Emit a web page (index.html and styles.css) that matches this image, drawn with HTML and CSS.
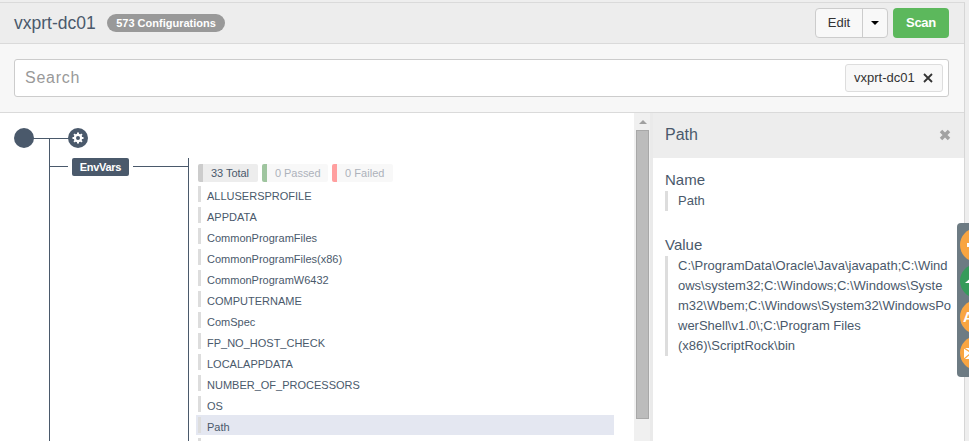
FILE: index.html
```html
<!DOCTYPE html>
<html lang="en">
<head>
<meta charset="utf-8">
<title>vxprt-dc01</title>
<link rel="stylesheet" href="styles.css">
</head>
<body>
<div class="app">
  <header class="header">
    <h1 class="title">vxprt-dc01</h1>
    <span class="badge">573 Configurations</span>
    <div class="actions">
      <div class="split">
        <button class="edit">Edit</button>
        <button class="caret" aria-label="More"><i></i></button>
      </div>
      <button class="scan">Scan</button>
    </div>
  </header>
  <div class="searchbar">
    <div class="search">
      <span class="placeholder">Search</span>
      <span class="tag"><span class="tag-text">vxprt-dc01</span>
        <svg width="10" height="10" viewBox="0 0 10 10"><path d="M1 1l8 8M9 1l-8 8" stroke="#333" stroke-width="1.8"/></svg>
      </span>
    </div>
  </div>
  <main class="main">
    <section class="tree">
      <svg class="links" width="190" height="328" viewBox="0 0 190 328">
        <g fill="#4a596b">
          <rect x="24" y="25" width="54" height="1"/>
          <rect x="49" y="25" width="1" height="303"/>
          <rect x="50" y="53" width="18" height="1"/>
          <rect x="133" y="53" width="55" height="1"/>
          <rect x="188" y="45" width="1" height="283"/>
          <circle cx="24" cy="25" r="10"/>
          <circle cx="78" cy="25" r="10"/>
        </g>
        <circle cx="78" cy="25" r="3.1" fill="none" stroke="#fff" stroke-width="2.2"/>
        <path d="M78 19.5v2M78 28.5v2M72.5 25h2M81.500 25h2M74.100 21.100l1.500 1.500M80.400 27.400l1.500 1.500M81.900 21.100l-1.500 1.500M75.600 27.400l-1.500 1.500" stroke="#fff" stroke-width="2"/>
      </svg>
      <span class="node">EnvVars</span>
      <div class="results">
        <div class="counts">
          <span class="count total">33 Total</span>
          <span class="count passed">0 Passed</span>
          <span class="count failed">0 Failed</span>
        </div>
        <ul class="items">
          <li>ALLUSERSPROFILE</li>
          <li>APPDATA</li>
          <li>CommonProgramFiles</li>
          <li>CommonProgramFiles(x86)</li>
          <li>CommonProgramW6432</li>
          <li>COMPUTERNAME</li>
          <li>ComSpec</li>
          <li>FP_NO_HOST_CHECK</li>
          <li>LOCALAPPDATA</li>
          <li>NUMBER_OF_PROCESSORS</li>
          <li>OS</li>
          <li class="selected">Path</li>
          <li></li>
        </ul>
      </div>
    </section>
    <div class="scroll"><i class="up"></i><div class="thumb"></div></div>
    <aside class="details">
      <div class="details-head"><h2>Path</h2>
        <svg width="12" height="12" viewBox="0 0 12 12"><path d="M2 2l8 8M10 2l-8 8" stroke="#a2a2a2" stroke-width="3.500"/></svg>
      </div>
      <div class="field">
        <h3>Name</h3>
        <div class="value">Path</div>
      </div>
      <div class="field">
        <h3>Value</h3>
        <div class="value">C:\ProgramData\Oracle\Java\javapath;C:\Wind<br>ows\system32;C:\Windows;C:\Windows\Syste<br>m32\Wbem;C:\Windows\System32\WindowsPo<br>werShell\v1.0\;C:\Program Files<br>(x86)\ScriptRock\bin</div>
      </div>
    </aside>
  </main>
</div>
<div class="dock">
  <span class="disc"><svg width="34" height="34" viewBox="0 0 34 34"><path d="M7 15h8v4H7z" fill="#fff"/></svg></span>
  <span class="disc green"><svg width="34" height="34" viewBox="0 0 34 34"><path d="M5 19l8-7v7z" fill="#fff"/></svg></span>
  <span class="disc letter">A</span>
  <span class="disc"><svg width="34" height="34" viewBox="0 0 34 34"><path d="M4 12h22v11H4z" fill="#fff"/><path d="M4 12l9 6 9-6M4 23l7-6" fill="none" stroke="#f9a541" stroke-width="1.200"/></svg></span>
</div>
</body>
</html>
```
FILE: styles.css
```css
* { box-sizing: border-box; }
body { margin: 0; width: 969px; height: 441px; overflow: hidden; background: #eee; font-family: "Liberation Sans", Arial, sans-serif; color: #4a596b; }
h1, h2, h3, ul { margin: 0; padding: 0; font-weight: normal; }
button { font-family: inherit; margin: 0; padding: 0; }
.app { width: 965px; height: 439px; margin-top: 2px; border-top: 1px solid #dadada; border-right: 1px solid #d6d6d6; }
.header { display: flex; align-items: center; height: 41px; padding: 0 15px 0 14px; background: #ededed; border-bottom: 1px solid #dadada; }
.title { font-size: 17.5px; line-height: 20px; width: 93px; white-space: nowrap; }
.badge { width: 118px; height: 18px; border-radius: 9px; background: #999; color: #fff; font-size: 11px; font-weight: bold; line-height: 18px; text-align: center; letter-spacing: 0; white-space: nowrap; }
.actions { display: flex; gap: 5px; margin-left: auto; }
.split { display: flex; width: 73px; height: 30px; border: 1px solid #ccc; border-radius: 4px; background: #f8f8f8; overflow: hidden; }
.edit { width: 47px; border: 0; border-right: 1px solid #ccc; background: none; font-size: 13px; color: #333; padding-bottom: 2px; }
.caret { flex: 1; display: flex; align-items: center; justify-content: center; border: 0; background: none; }
.caret i { border: 4px solid transparent; border-top-color: #000; border-bottom: 0; }
.scan { width: 56px; height: 30px; border: 0; border-radius: 4px; background: #5cb85c; color: #fff; font-size: 13px; font-weight: bold; letter-spacing: -.3px; padding-bottom: 2px; }
.searchbar { height: 69px; padding: 15px 15px 0 14px; background: #f7f7f7; border-bottom: 1px solid #dadada; }
.search { display: flex; align-items: center; justify-content: space-between; height: 38px; padding: 0 5px 0 10px; border: 1px solid #ccc; border-radius: 3px; background: #fff; }
.placeholder { font-size: 16px; letter-spacing: .75px; color: #999; }
.tag { display: flex; align-items: center; justify-content: space-between; width: 98px; height: 28px; padding: 0 9px 0 8px; border: 1px solid #ddd; border-radius: 3px; background: #f8f8f8; font-size: 13px; color: #333; }
.tag-text { padding-bottom: 1px; }
.main { display: flex; height: 328px; background: #fff; }
.tree { position: relative; width: 634px; height: 328px; overflow: hidden; }
.links { position: absolute; left: 0; top: 0; }
.node { position: absolute; left: 72px; top: 45px; width: 57px; height: 18px; border-radius: 2px; background: #4a596b; color: #fff; font-size: 11px; font-weight: bold; line-height: 19px; text-align: center; letter-spacing: -.3px; }
.results { margin: 51px 0 0 196px; width: 418px; }
.counts { display: flex; gap: 4px; height: 18px; padding-left: 2px; }
.count { border-left: 5px solid; border-radius: 2px; padding-left: 8px; font-size: 11px; line-height: 18px; background: #f8f8f8; color: #adb2bb; white-space: nowrap; }
.total { width: 60px; border-color: #ccc; background: #ededed; color: #4a596b; letter-spacing: -.05px; }
.passed { width: 66px; border-color: #9fc59f; letter-spacing: -.05px; }
.failed { width: 61px; border-color: #ff9f9f; letter-spacing: .05px; }
.items { list-style: none; padding-top: 2px; }
.items li { display: flex; align-items: flex-start; height: 21px; padding: 2px 0 0 2px; font-size: 11px; line-height: 21px; white-space: nowrap; }
.items li::before { content: ""; flex: none; width: 3px; height: 16px; margin-right: 6px; background: #ddd; }
.items .selected { background: #e4e7f1; height: 20px; margin-bottom: 1px; }
.scroll { width: 18px; background: #f0f0f0; border-right: 2px solid #eaeaea; padding-left: 2px; }
.up { display: block; width: 0; margin: 7px 0 6px 3px; border: 4px solid transparent; border-top: 0; border-bottom-color: #a0a0a0; }
.thumb { width: 13px; height: 289px; background: #bcbcbc; border: 1px solid #a8a8a8; }
.details { width: 312px; border-left: 1px solid #eaeaea; }
.details-head { display: flex; align-items: center; justify-content: space-between; height: 45px; padding: 0 13px 2px 12px; background: #ededed; }
.details-head h2 { font-size: 16px; }
.field { height: 65px; padding: 13px 0 0 12px; }
.field h3 { font-size: 15px; line-height: 18px; }
.value { width: 289px; margin-top: 2px; padding-left: 10px; border-left: 3px solid #ddd; font-size: 13px; line-height: 20px; white-space: nowrap; }
.dock { position: absolute; left: 957px; top: 223px; width: 12px; height: 154px; padding: 5px 0 0 3px; border-radius: 4px 0 0 4px; background: #6d7b83; overflow: hidden; }
.disc { display: block; width: 34px; height: 34px; margin-bottom: 2px; border-radius: 50%; background: #f9a541; }
.disc svg { display: block; }
.green { background: #369b5b; }
.letter { padding-left: 3px; color: #fff; font-size: 15px; font-weight: bold; line-height: 34px; }
```
